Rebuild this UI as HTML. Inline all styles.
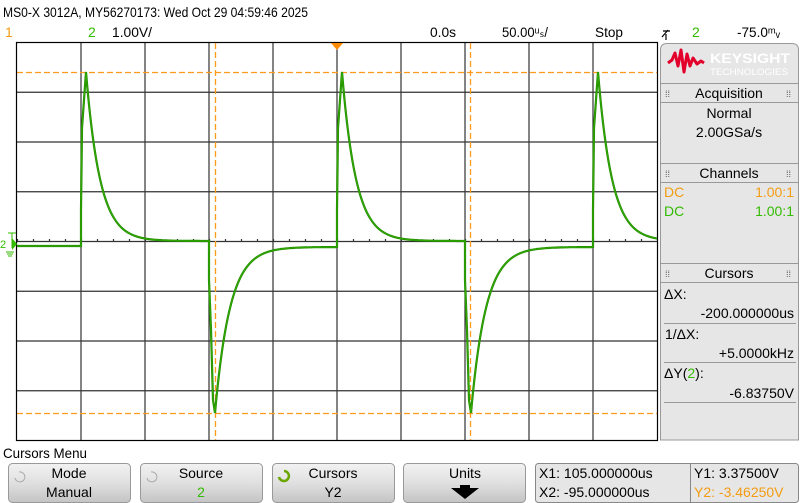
<!DOCTYPE html>
<html><head><meta charset="utf-8"><style>
html,body{margin:0;padding:0;background:#fff;}
svg{display:block;font-family:"Liberation Sans",sans-serif;}
</style></head><body>
<svg id="s" width="800" height="503" viewBox="0 0 800 503" xmlns="http://www.w3.org/2000/svg">
<rect width="800" height="503" fill="#fff"/>
<text x="3" y="17" font-size="14" textLength="305" lengthAdjust="spacingAndGlyphs" fill="#000">MS0-X 3012A, MY56270173: Wed Oct 29 04:59:46 2025</text>
<text x="5" y="37" font-size="14" fill="#f39c12">1</text>
<text x="88" y="37" font-size="14" fill="#33bb00">2</text>
<text x="112" y="37" font-size="14" textLength="40" lengthAdjust="spacingAndGlyphs">1.00V/</text>
<text x="430" y="37" font-size="14" textLength="26" lengthAdjust="spacingAndGlyphs">0.0s</text>
<text x="502" y="37" font-size="14" textLength="46" lengthAdjust="spacingAndGlyphs">50.00ᵘₛ/</text>
<text x="595" y="37" font-size="14" textLength="28" lengthAdjust="spacingAndGlyphs">Stop</text>
<path d="M662 37 L668 30 M663 31 L670 31 M666 34 L666 40" stroke="#000" stroke-width="1.2" fill="none"/>
<text x="692" y="37" font-size="14" fill="#33bb00">2</text>
<text x="737" y="37" font-size="14" textLength="43" lengthAdjust="spacingAndGlyphs">-75.0ᵐᵥ</text>
<g id="grid" stroke="#333" stroke-width="1.2"></g>
<rect x="16.5" y="42.5" width="641" height="398" fill="none" stroke="#000" stroke-width="1.2"/>
<line x1="17" y1="72.5" x2="657" y2="72.5" stroke="#ff9a1a" stroke-width="1.3" stroke-dasharray="6,3"/>
<line x1="17" y1="413.5" x2="657" y2="413.5" stroke="#ff9a1a" stroke-width="1.3" stroke-dasharray="6,3"/>
<line x1="215.5" y1="43" x2="215.5" y2="440" stroke="#ff9a1a" stroke-width="1.3" stroke-dasharray="6,3"/>
<line x1="470.5" y1="43" x2="470.5" y2="440" stroke="#ff9a1a" stroke-width="1.3" stroke-dasharray="6,3"/>
<polygon points="331,43 343,43 337,50" fill="#ff8c00"/>
<path id="wave" fill="none" stroke="#1f8a00" stroke-width="2.2"/>
<path id="wave2" fill="none" stroke="#33aa00" stroke-width="1"/>
<text x="0" y="248" font-size="11" fill="#33bb00">2</text>
<path d="M8 233 H16 M12 233 V248 M6 252 H14 M7 254 H13 M8 256 H12" stroke="#33bb00" fill="none"/>
<polygon points="12,238 17,244 12,250" fill="#33bb00"/>
<path d="M660.5 440 V50 Q660.5 43.5 667 43.5 H792 Q798.5 43.5 798.5 50 V440 Z" fill="#e6e6e6" stroke="#999"/>
<path d="M668 63 L672 60 L675 53 L678 66 L681 50 L684 72 L687 54 L690 66 L693 58 L697 64 L701 61 L704 63" stroke="#e3002b" stroke-width="3" fill="none" stroke-linejoin="round"/>
<text x="710" y="63" font-size="14" font-weight="bold" fill="#fff" textLength="80" lengthAdjust="spacingAndGlyphs">KEYSIGHT</text>
<text x="710" y="75" font-size="9" fill="#fff" textLength="78" lengthAdjust="spacingAndGlyphs">TECHNOLOGIES</text>
<g stroke="#999" stroke-width="1">
<line x1="661" y1="83.5" x2="798" y2="83.5"/><line x1="661" y1="102.5" x2="798" y2="102.5"/>
<line x1="661" y1="163.5" x2="798" y2="163.5"/><line x1="661" y1="182.5" x2="798" y2="182.5"/>
<line x1="661" y1="263.5" x2="798" y2="263.5"/><line x1="661" y1="282.5" x2="798" y2="282.5"/>
<line x1="664" y1="323.5" x2="796" y2="323.5"/><line x1="664" y1="362.5" x2="796" y2="362.5"/><line x1="664" y1="402.5" x2="796" y2="402.5"/>
</g>
<g font-size="14" text-anchor="middle">
<text x="729" y="98">Acquisition</text>
<text x="729" y="118">Normal</text>
<text x="729" y="137">2.00GSa/s</text>
<text x="729" y="178">Channels</text>
<text x="729" y="278">Cursors</text>
</g>
<g font-size="9" fill="#555"><text x="665" y="97">⁞⁞</text><text x="786" y="97">⁞⁞</text><text x="665" y="177">⁞⁞</text><text x="786" y="177">⁞⁞</text><text x="665" y="277">⁞⁞</text><text x="786" y="277">⁞⁞</text></g>
<g font-size="14">
<text x="664" y="197" fill="#f39c12">DC</text><text x="794" y="197" fill="#f39c12" text-anchor="end">1.00:1</text>
<text x="664" y="216" fill="#33bb00">DC</text><text x="794" y="216" fill="#33bb00" text-anchor="end">1.00:1</text>
<text x="664" y="299">ΔX:</text>
<text x="794" y="318" text-anchor="end">-200.000000us</text>
<text x="665" y="339">1/ΔX:</text>
<text x="794" y="358" text-anchor="end">+5.0000kHz</text>
<text x="664" y="378">ΔY(<tspan fill="#33bb00">2</tspan>):</text>
<text x="794" y="398" text-anchor="end">-6.83750V</text>
</g>
<text x="3" y="458" font-size="14" textLength="84" lengthAdjust="spacingAndGlyphs">Cursors Menu</text>
<defs><linearGradient id="g" x1="0" y1="0" x2="0" y2="1"><stop offset="0" stop-color="#f2f2f2"/><stop offset="0.5" stop-color="#e0e0e0"/><stop offset="1" stop-color="#c4c4c4"/></linearGradient></defs>
<g stroke="#999" fill="url(#g)">
<rect x="8.5" y="463.5" width="122" height="39" rx="4"/>
<rect x="140.5" y="463.5" width="122" height="39" rx="4"/>
<rect x="272.5" y="463.5" width="122" height="39" rx="4"/>
<rect x="403.5" y="463.5" width="122" height="39" rx="4"/>
</g>
<rect x="535.5" y="463.5" width="263" height="39" rx="3" fill="#e6e6e6" stroke="#888"/>
<line x1="690.5" y1="464" x2="690.5" y2="502" stroke="#888"/>
<g fill="none" stroke="#aaa" stroke-width="1"><path d="M15 478 A5 5 0 1 0 19 472"/><path d="M147 478 A5 5 0 1 0 151 472"/></g>
<path d="M279 477 A5 5 0 1 0 284 471" stroke="#6aa500" stroke-width="2.5" fill="none"/>
<g font-size="14" text-anchor="middle">
<text x="69" y="478">Mode</text><text x="69" y="497">Manual</text>
<text x="201" y="478">Source</text><text x="201" y="497" fill="#33bb00">2</text>
<text x="333" y="478">Cursors</text><text x="333" y="497">Y2</text>
<text x="465" y="478">Units</text>
</g>
<polygon points="451,488 479,488 465,499" fill="#000"/>
<rect x="460" y="485" width="10" height="4" fill="#000"/>
<g font-size="14">
<text x="539" y="478">X1: 105.000000us</text>
<text x="539" y="497">X2: -95.000000us</text>
<text x="694" y="478">Y1: 3.37500V</text>
<text x="694" y="497" fill="#f39c12">Y2: -3.46250V</text>
</g>
</svg>
<script>
var g=document.getElementById('grid'),h='';
for(var i=1;i<10;i++){var x=17+i*64;h+='<line x1="'+x+'" y1="43" x2="'+x+'" y2="440"/>';}
for(var j=1;j<8;j++){var y=42.5+j*49.75;h+='<line x1="17" y1="'+y+'" x2="657" y2="'+y+'"/>';}
for(var x=17;x<657;x+=16){h+='<line x1="'+(x+0.5)+'" y1="239" x2="'+(x+0.5)+'" y2="242"/>';}
g.innerHTML=h;
var p='M17 246 L81 246';
function rise(x0,end){p+=' L'+x0+' 210 L'+(x0+1)+' 128 L'+(x0+3)+' 100 L'+(x0+5)+' 72';
 for(var x=x0+6;x<=end;x++){p+=' L'+x+' '+(241-169*Math.exp(-(x-x0-5)/14)).toFixed(1);}}
function fall(x0,end){p+=' L'+x0+' 280 L'+(x0+2)+' 330 L'+(x0+4)+' 400 L'+(x0+6)+' 413';
 for(var x=x0+7;x<=end;x++){p+=' L'+x+' '+(247+166*Math.exp(-(x-x0-6)/15)).toFixed(1);}}
rise(81,209);fall(209,337);rise(337,465);fall(465,593);rise(593,657);
document.getElementById('wave').setAttribute('d',p);
document.getElementById('wave2').setAttribute('d',p);
</script>
</body></html>
